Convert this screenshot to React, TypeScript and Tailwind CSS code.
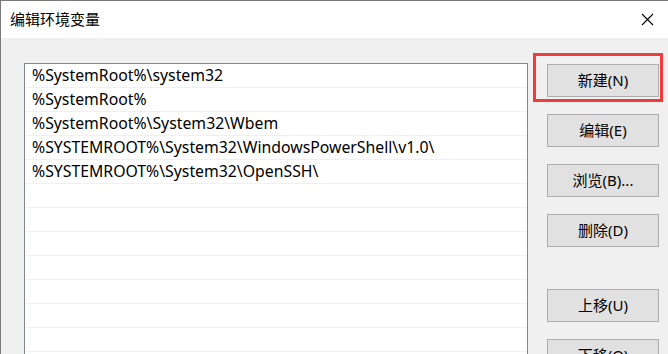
import React from 'react';

const paths = [
  '%SystemRoot%\\system32',
  '%SystemRoot%',
  '%SystemRoot%\\System32\\Wbem',
  '%SYSTEMROOT%\\System32\\WindowsPowerShell\\v1.0\\',
  '%SYSTEMROOT%\\System32\\OpenSSH\\',
];

const rows = [...paths, ...Array(8).fill('')];

const font = { fontFamily: '"Noto Sans", "Noto Sans CJK SC", sans-serif' };

const Btn = ({ label, className = '' }: { label: string; className?: string }) => (
  <div
    className={`h-[33px] w-[112px] flex items-center justify-center bg-[#e1e1e1] border border-[#adadad] text-[15px] text-black ${className}`}
  >
    {label}
  </div>
);

export default function App() {
  return (
    <div
      className="w-[668px] h-[354px] overflow-hidden bg-[#f0f0f0] border-t border-l border-[#7a7a7a] flex flex-col"
      style={font}
    >
      {/* title bar */}
      <div className="h-[37px] shrink-0 bg-white flex items-center justify-between pl-[9px] pr-[14px]">
        <span className="text-[15px] text-black">编辑环境变量</span>
        <svg width="13" height="13" viewBox="0 0 13 13" className="mb-[1px]">
          <path d="M1 1 L12 12 M12 1 L1 12" stroke="#000" strokeWidth="1.1" fill="none" />
        </svg>
      </div>

      <div className="flex pt-[25px] pl-[23px]">
        {/* list */}
        <div className="w-[504px] h-[300px] bg-white border border-[#828790] shrink-0">
          {rows.map((r, i) => (
            <div
              key={i}
              className="h-[24px] border-b border-[#f0f0f0] pl-[7px] flex items-center text-[15.8px] text-black whitespace-nowrap"
            >
              {r}
            </div>
          ))}
        </div>

        {/* buttons */}
        <div className="flex flex-col pt-[1px] ml-[19px] gap-[17px]">
          <div className="relative">
            <Btn label="新建(N)" />
            <div className="absolute left-[-14px] top-[-11px] w-[130px] h-[49px] border-[3px] border-[#ee3b3b]" />
          </div>
          <Btn label="编辑(E)" />
          <Btn label="浏览(B)..." />
          <Btn label="删除(D)" />
          <Btn label="上移(U)" className="mt-[25px]" />
          <Btn label="下移(O)" />
        </div>
      </div>
    </div>
  );
}
